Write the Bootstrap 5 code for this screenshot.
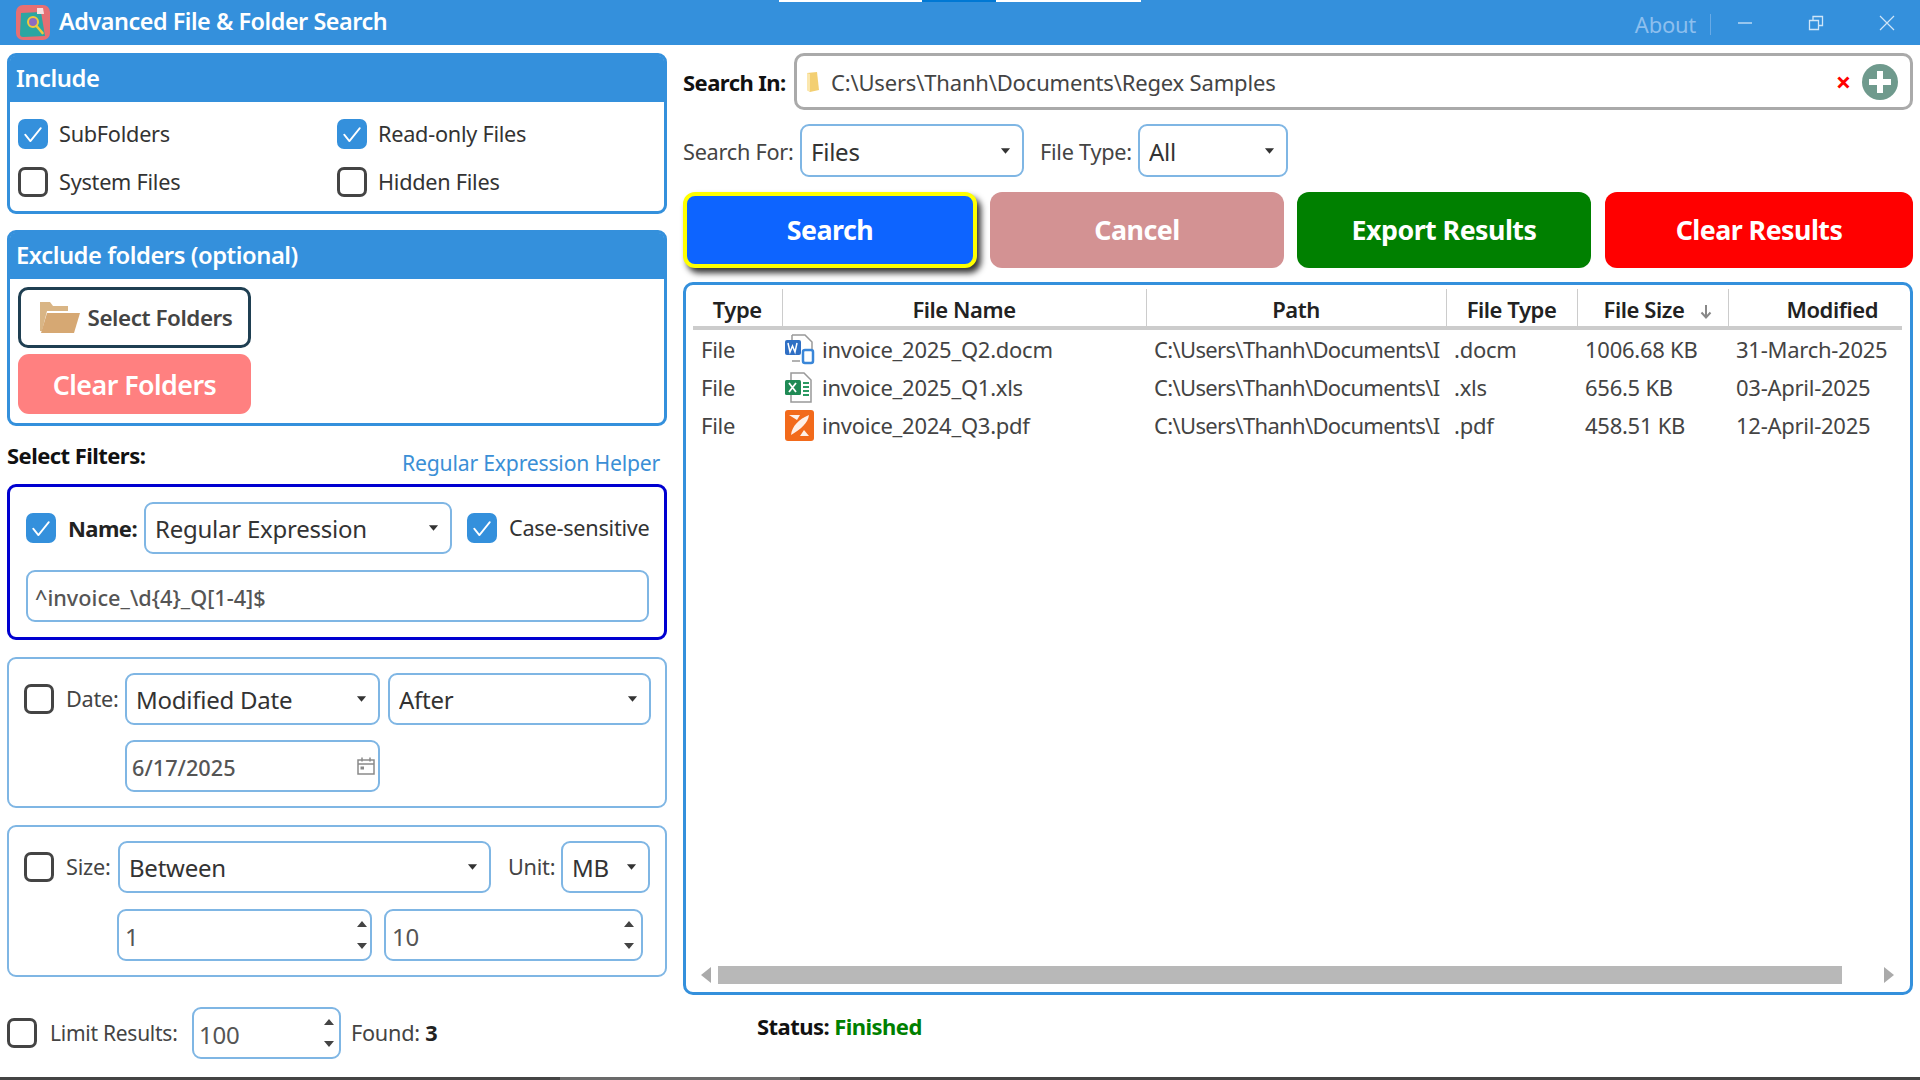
<!DOCTYPE html>
<html lang="en"><head><meta charset="utf-8"><title>Advanced File &amp; Folder Search</title>
<link href="https://cdn.jsdelivr.net/npm/bootstrap@5.3.0/dist/css/bootstrap.min.css" rel="stylesheet">
<style>
html,body{height:100%;overflow:hidden}
body{font-family:"Noto Sans","Open Sans",sans-serif;font-size:21.7px;color:#333;background:#fff;display:flex;flex-direction:column;letter-spacing:-.012em}
.tbar{height:45px;background:#3490dc;color:#fff;flex:none;position:relative;padding-left:16px}
.tbar-logo{width:34px;height:35px;margin-right:9px}
.tbar-title{font-size:23.4px;font-weight:600;letter-spacing:-.02em;margin-top:-2px}
.tbar-about{color:#8dbfee;font-size:22px;margin-right:14px;margin-top:4px}
.tbar-sep{width:1px;height:21px;background:#69aae6;margin-right:26px;margin-top:3px}
.tbar-ico{margin-right:55px}
.tbar-ico:last-child{margin-right:25px}
.progress-strip{position:absolute;top:0;left:779px;width:362px;height:2px;background:#fff}
.progress-strip i{position:absolute;left:143px;width:74px;height:2px;background:#0078d4}
.mainrow{flex:1;min-height:0;padding:8px 7px 0;gap:16px}
.leftcol{width:660px;flex:none}
.rightcol{width:1230px;flex:none}
.pane{border:3px solid #3490dc;border-radius:9px;--bs-card-bg:#fff}
.pane-head{background:#3490dc;color:#fff;font-weight:600;font-size:23.8px;height:46px;padding:0 6px;border:0;border-radius:5px 5px 0 0;letter-spacing:-.02em}
.include-body{padding:17px 8px 14px}
.include-body .cklabel{margin-left:11px}
.rowgap{row-gap:18px}
.exclude-body{padding:8px 8px 9px;gap:6px}
.btn-sel{width:233px;height:61px;border:3px solid #1f3f52;border-radius:10px;background:#fff;color:#444;font-weight:600;font-size:22.4px;padding:0;letter-spacing:-.02em}
.btn-sel svg{margin-right:7px}
.btn-clr{width:233px;height:60px;border:0;border-radius:11px;background:#ff8080;color:#fff;font-weight:600;font-size:26.8px;padding:2px 0 0;letter-spacing:-.02em}
.filterhead{height:58px}
.filterlabel{font-weight:700;color:#111;margin-top:14px;font-size:22px;letter-spacing:-.025em;line-height:30px}
.helperlink{color:#3b8fd6;text-decoration:none;margin:22px 7px 0 0;font-size:21.2px;letter-spacing:-.01em;line-height:30px}
.fbox{border-radius:9px;background:#fff}
.fbox-name{border:3px solid #0000d0;padding:15px 15px 15px 16px}
.fbox-plain{border:2px solid #7fb6e4;padding:14px 14px 14px 15px;margin-top:17px}
.frow2{margin-top:15px}
.fbox-size .frow2{margin-top:16px}
.frow-name2{margin-top:16px}
.form-check-input.ck{width:30px;height:30px;margin:0;flex:none;border:3px solid #444;border-radius:7px;background-color:#fff;box-shadow:none}
.form-check-input.ck:checked{background-color:#3490dc;border-color:#3490dc;background-size:26px;background-image:url("data:image/svg+xml,%3csvg xmlns='http://www.w3.org/2000/svg' viewBox='0 0 20 20'%3e%3cpath fill='none' stroke='%23fff' stroke-linecap='round' stroke-linejoin='round' stroke-width='1.4' d='M4 10.5l4 5 8-10'/%3e%3c/svg%3e")}
.cklabel{color:#333;white-space:nowrap;line-height:30px}
.form-select.ctl,.form-control.ctl{height:52px;border:2px solid #7fb6e4;border-radius:9px;font-size:24px;color:#333;padding:2px 30px 0 9px;box-shadow:none;letter-spacing:-.01em}
.form-select.ctl{flex:none;background-image:url("data:image/svg+xml,%3csvg xmlns='http://www.w3.org/2000/svg' viewBox='0 0 12 8'%3e%3cpath fill='%23333' d='M1 1h10L6 7z'/%3e%3c/svg%3e");background-size:11px 8px;background-position:right 11px center}
.form-control.txt{font-size:21.7px;font-weight:500;color:#555;padding-left:7px;letter-spacing:0}
.form-control.ctl.date-in{padding-left:5px}
.form-control.ctl.num{padding-left:6px;color:#555}
.w-namesel{width:308px}
.form-check-input.ck.w-casesel{margin-left:15px}
.namelbl{font-weight:700;color:#222;margin:0 0 0 12px;width:76px;flex:none;font-size:22px;letter-spacing:-.025em;line-height:30px}
.plainlbl{margin:0 0 0 12px;color:#444;flex:none;line-height:30px}
.lbl-date{width:59px}
.lbl-size{width:52px}
.w-date1{width:255px}
.w-date2{width:263px;margin-left:8px}
.ml-date{margin-left:101px}
.w-size{width:373px}
.unitlbl{margin:0 0 0 17px;width:53px;flex:none;color:#444;line-height:30px}
.w-unit{width:89px}
.ml-size{margin-left:93px;gap:12px}
.w-n1{width:255px}
.w-n2{width:259px}
.spinwrap{position:relative}
.spinner-ico{position:absolute;right:8px;top:50%;transform:translateY(-50%);pointer-events:none}
.w-n1 .spinner-ico{right:4px}
.cal-ico{position:absolute;right:4px;top:50%;transform:translateY(-50%)}
.limitrow{margin-top:30px}
.w-limit{width:149px;flex:none}
.w-limit .form-control.ctl.num{padding-left:5px}
.w-limit .spinner-ico{right:6px}
.limit-lbl{margin-left:13px;width:142px;flex:none;color:#444;line-height:30px;font-size:21px}
.foundlbl{margin-left:10px;color:#444;line-height:30px}
.foundlbl b{color:#222}
.searchrow{height:57px}
.srchlabel{font-weight:700;color:#111;width:111px;flex:none;font-size:22px;letter-spacing:-.025em;padding-top:2px}
.pathbox{flex:1;height:57px;border:3px solid #aaa;border-radius:10px;padding:0 12px 0 8px;position:relative}
.pathtext{margin-left:10px;font-size:22px;color:#444;letter-spacing:-.008em;padding-top:2px}
.xmark{color:#f00;font-size:27px;font-weight:700;margin-right:11px;line-height:1}
.optrow{margin-top:14px}
.optrow .form-select.ctl{height:53px}
.lbl2{color:#444;width:117px;flex:none;padding-top:3px}
.w-for{width:224px}
.lbl3{margin-left:16px;width:98px;flex:none;color:#444;padding-top:3px}
.w-ftype{width:150px}
.actrow{margin-top:15px;gap:13px;height:76px}
.actbtn{width:294px;flex:none;border:0;border-radius:12px;color:#fff;font-weight:700;font-size:26.8px;padding:0;letter-spacing:-.02em}
.actbtn.last{width:308px;margin-left:1px}
.a-search{background:#0d64ff;border:4px solid #ff0;box-shadow:4px 5px 6px rgba(0,0,0,.8)}
.a-cancel{background:#d39293}
.a-export{background:#008000}
.a-clear{background:#f00}
.tablewrap{margin-top:14px;height:713px;border:3px solid #3490dc;border-radius:10px;padding:4px 7px 8px;background:#fff}
.tablearea{flex:1;min-height:0}
.rtable{table-layout:fixed;width:1209px;margin:0;--bs-table-bg:transparent;font-size:22px;color:#444}
.rtable th{height:39px;padding:3px 0 0;border-bottom:4px solid #ccc;border-right:1px solid #ccc;text-align:center;font-weight:600;color:#222;vertical-align:middle;letter-spacing:-.02em}
.rtable th:last-child{border-right:0;padding-left:34px}
.rtable th.sizehead{padding-left:11px}
.rtable td{height:38px;padding:0 0 0 8px;border:0;white-space:nowrap;overflow:hidden;vertical-align:middle;color:#444;line-height:1}
.rtable td.pathcell{letter-spacing:-.03em}
.rtable tbody tr:first-child td{height:40px}
.rtable td.namecell{padding:0}
.namewrap svg{margin:0 7px 0 2px;flex:none}
.sortarrow{margin-left:16px;vertical-align:-1px}
.hscroll{height:18px;margin:0 0 0 7px;gap:6px}
.hs-thumb{width:1124px;height:18px;background:#b8b8b8}
.statusline{margin:15px 0 0 74px;font-weight:700;color:#111;font-size:22px;letter-spacing:-.025em}
.statusline span{color:#008000}
.bottomstrip{height:3px;flex:none;background:#444}
.bottomstrip i{display:block;margin-left:560px;width:240px;height:3px;background:#6a6a6a}
</style></head>
<body>
<header class="tbar d-flex align-items-center">
  <div class="progress-strip"><i></i></div>
  <svg class="tbar-logo" viewBox="0 0 34 35"><rect width="34" height="35" rx="7" fill="#e66f73"/><path d="M5 8l20-1 4 24-22 1a3 3 0 0 1-3-3z" fill="#2ba6a2"/><path d="M21 3l6 0 1 6-7 0z" fill="#f6dfe0"/><circle cx="17" cy="17" r="5" fill="#8d6bc0" stroke="#f1c93b" stroke-width="2"/><path d="M20.500 21l6 7" stroke="#f1c93b" stroke-width="2.600" stroke-linecap="round"/></svg>
  <div class="tbar-title">Advanced File &amp; Folder Search</div>
  <div class="ms-auto d-flex align-items-center">
    <div class="tbar-about">About</div><div class="tbar-sep"></div>
    <svg class="tbar-ico" width="16" height="16" viewBox="0 0 16 16"><path d="M1 8h14" stroke="#b9d9f5" stroke-width="1.500"/></svg>
    <svg class="tbar-ico" width="16" height="16" viewBox="0 0 16 16"><path d="M1.500 5.500h9v9h-9zM5 5.500V1.500h9.500v9H10.500" fill="none" stroke="#cfe5f8" stroke-width="1.300"/></svg>
    <svg class="tbar-ico" width="16" height="16" viewBox="0 0 16 16"><path d="M1 1l14 14M15 1L1 15" stroke="#cfe5f8" stroke-width="1.200"/></svg>
  </div>
</header>
<main class="mainrow d-flex">
  <section class="leftcol">
    <div class="card pane">
      <div class="pane-head d-flex align-items-center">Include</div>
      <div class="include-body row g-0 rowgap">
        <div class="col-6 d-flex align-items-center"><input class="form-check-input ck" type="checkbox" checked><span class="cklabel">SubFolders</span></div>
        <div class="col-6 d-flex align-items-center"><input class="form-check-input ck" type="checkbox" checked><span class="cklabel">Read-only Files</span></div>
        <div class="col-6 d-flex align-items-center"><input class="form-check-input ck" type="checkbox"><span class="cklabel">System Files</span></div>
        <div class="col-6 d-flex align-items-center"><input class="form-check-input ck" type="checkbox"><span class="cklabel">Hidden Files</span></div>
      </div>
    </div>
    <div class="card pane mt-3">
      <div class="pane-head d-flex align-items-center">Exclude folders (optional)</div>
      <div class="exclude-body d-flex flex-column">
        <button class="btn btn-sel d-flex align-items-center justify-content-center" type="button"><svg width="44" height="34" viewBox="0 0 44 34"><path d="M3 1h10l3 4h15v5H10L5 30H3z" fill="#d9b585"/><path d="M10 12h33l-6 20H4z" fill="#d6a873"/></svg>Select Folders</button>
        <button class="btn btn-clr" type="button">Clear Folders</button>
      </div>
    </div>
    <div class="filterhead d-flex justify-content-between align-items-start">
      <div class="filterlabel">Select Filters:</div>
      <a class="helperlink" href="#">Regular Expression Helper</a>
    </div>
    <div class="fbox fbox-name">
      <div class="d-flex align-items-center">
        <input class="form-check-input ck" type="checkbox" checked>
        <span class="namelbl">Name:</span>
        <select class="form-select ctl w-namesel"><option>Regular Expression</option></select>
        <input class="form-check-input ck w-casesel" type="checkbox" checked>
        <span class="cklabel ms-2 ps-1">Case-sensitive</span>
      </div>
      <input class="form-control ctl txt frow-name2" type="text" value="^invoice_\d{4}_Q[1-4]$">
    </div>
    <div class="fbox fbox-plain">
      <div class="d-flex align-items-center">
        <input class="form-check-input ck" type="checkbox">
        <span class="plainlbl lbl-date">Date:</span>
        <select class="form-select ctl w-date1"><option>Modified Date</option></select>
        <select class="form-select ctl w-date2"><option>After</option></select>
      </div>
      <div class="frow2 ml-date spinwrap w-date1">
        <input class="form-control ctl txt date-in" type="text" value="6/17/2025">
        <svg class="cal-ico spinner-ico" width="20" height="20" viewBox="0 0 20 20"><path d="M2 4h16v14H2zM2 8h16M6 1.500v4M14 1.500v4" fill="none" stroke="#8a8a8a" stroke-width="1.500"/><rect x="4.500" y="10.500" width="3.500" height="3" fill="#8a8a8a"/></svg>
      </div>
    </div>
    <div class="fbox fbox-plain fbox-size">
      <div class="d-flex align-items-center">
        <input class="form-check-input ck" type="checkbox">
        <span class="plainlbl lbl-size">Size:</span>
        <select class="form-select ctl w-size"><option>Between</option></select>
        <span class="unitlbl">Unit:</span>
        <select class="form-select ctl w-unit"><option>MB</option></select>
      </div>
      <div class="frow2 ml-size d-flex">
        <div class="spinwrap w-n1"><input class="form-control ctl num" type="text" value="1"><svg class="spinner-ico" width="12" height="32" viewBox="0 0 12 32"><path d="M1 8l5-6 5 6zM1 24l5 6 5-6z" fill="#444"/></svg></div>
        <div class="spinwrap w-n2"><input class="form-control ctl num" type="text" value="10"><svg class="spinner-ico" width="12" height="32" viewBox="0 0 12 32"><path d="M1 8l5-6 5 6zM1 24l5 6 5-6z" fill="#444"/></svg></div>
      </div>
    </div>
    <div class="limitrow d-flex align-items-center">
      <input class="form-check-input ck" type="checkbox">
      <span class="limit-lbl">Limit Results:</span>
      <div class="spinwrap w-limit"><input class="form-control ctl num" type="text" value="100"><svg class="spinner-ico" width="12" height="32" viewBox="0 0 12 32"><path d="M1 8l5-6 5 6zM1 24l5 6 5-6z" fill="#444"/></svg></div>
      <span class="foundlbl">Found: <b>3</b></span>
    </div>
  </section>
  <section class="rightcol">
    <div class="searchrow d-flex align-items-center">
      <div class="srchlabel">Search In:</div>
      <div class="pathbox d-flex align-items-center">
        <svg width="16" height="22" viewBox="0 0 16 22"><path d="M2 2l10-1 2 18-9 2-3-2z" fill="#f3cf72"/><path d="M2 2l3 1v18l-3-2z" fill="#fbe7ae"/></svg>
        <span class="pathtext">C:\Users\Thanh\Documents\Regex Samples</span>
        <span class="xmark ms-auto">×</span>
        <svg width="36" height="36" viewBox="0 0 36 36"><circle cx="18" cy="18" r="18" fill="#6f9a8d"/><path d="M18 7v22M7 18h22" stroke="#fff" stroke-width="6"/></svg>
      </div>
    </div>
    <div class="optrow d-flex align-items-center">
      <span class="lbl2">Search For:</span>
      <select class="form-select ctl w-for"><option>Files</option></select>
      <span class="lbl3">File Type:</span>
      <select class="form-select ctl w-ftype"><option>All</option></select>
    </div>
    <div class="actrow d-flex">
      <button class="btn actbtn a-search" type="button">Search</button>
      <button class="btn actbtn a-cancel" type="button">Cancel</button>
      <button class="btn actbtn a-export" type="button">Export Results</button>
      <button class="btn actbtn a-clear last" type="button">Clear Results</button>
    </div>
    <div class="tablewrap d-flex flex-column">
      <div class="tablearea">
        <table class="table rtable">
          <colgroup><col style="width:89px"><col style="width:364px"><col style="width:300px"><col style="width:131px"><col style="width:151px"><col style="width:174px"></colgroup>
          <thead><tr><th>Type</th><th>File Name</th><th>Path</th><th>File Type</th><th class="sizehead">File Size<svg class="sortarrow" width="12" height="15" viewBox="0 0 12 15"><path d="M6 1v12M1.500 8.500L6 13.500l4.500-5" fill="none" stroke="#888" stroke-width="2"/></svg></th><th>Modified</th></tr></thead>
          <tbody>
            <tr><td>File</td><td class="namecell"><div class="d-flex align-items-center namewrap"><svg width="31" height="31" viewBox="0 0 31 31"><path d="M8 1h13l7 7v14h-4M8 1v6M8 27h8" fill="none" stroke="#999" stroke-width="1.500"/><rect x="1" y="6" width="16" height="15" rx="2" fill="#2f6fc4"/><path d="M4 9l2 9 2.500-6 2.500 6 2-9" fill="none" stroke="#fff" stroke-width="1.500"/><rect x="19" y="16" width="10" height="13" rx="2" fill="#fff" stroke="#3a86d8" stroke-width="2.500"/></svg><span>invoice_2025_Q2.docm</span></div></td><td class="pathcell">C:\Users\Thanh\Documents\I</td><td>.docm</td><td>1006.68 KB</td><td>31-March-2025</td></tr>
            <tr><td>File</td><td class="namecell"><div class="d-flex align-items-center namewrap"><svg width="31" height="31" viewBox="0 0 31 31"><path d="M7 1h13l7 7v22H7z" fill="#fff" stroke="#999" stroke-width="1.500"/><rect x="1" y="8" width="16" height="15" rx="1.500" fill="#1f8a55"/><path d="M5 11l7 9M12 11l-7 9" stroke="#fff" stroke-width="1.800"/><path d="M19 11h6M19 15h6M19 19h6M19 23h6" stroke="#2a9a62" stroke-width="2"/></svg><span>invoice_2025_Q1.xls</span></div></td><td class="pathcell">C:\Users\Thanh\Documents\I</td><td>.xls</td><td>656.5 KB</td><td>03-April-2025</td></tr>
            <tr><td>File</td><td class="namecell"><div class="d-flex align-items-center namewrap"><svg width="31" height="31" viewBox="0 0 31 31"><rect x="1" y="0" width="29" height="31" rx="3" fill="#f26a1b"/><path d="M5 5h11l-3 5zM25 5c-1 8-8 14-18 20 1-9 8-16 18-20zM20 20l5 6h-9z" fill="#fff" opacity=".9"/></svg><span>invoice_2024_Q3.pdf</span></div></td><td class="pathcell">C:\Users\Thanh\Documents\I</td><td>.pdf</td><td>458.51 KB</td><td>12-April-2025</td></tr>
          </tbody>
        </table>
      </div>
      <div class="hscroll d-flex align-items-center">
        <svg width="12" height="18" viewBox="0 0 12 18"><path d="M11 1L1 9l10 8z" fill="#aaa"/></svg>
        <div class="hs-thumb"></div>
        <svg class="ms-auto me-2" width="12" height="18" viewBox="0 0 12 18"><path d="M1 1l10 8-10 8z" fill="#aaa"/></svg>
      </div>
    </div>
    <div class="statusline">Status: <span>Finished</span></div>
  </section>
</main>
<div class="bottomstrip"><i></i></div>
</body></html>
